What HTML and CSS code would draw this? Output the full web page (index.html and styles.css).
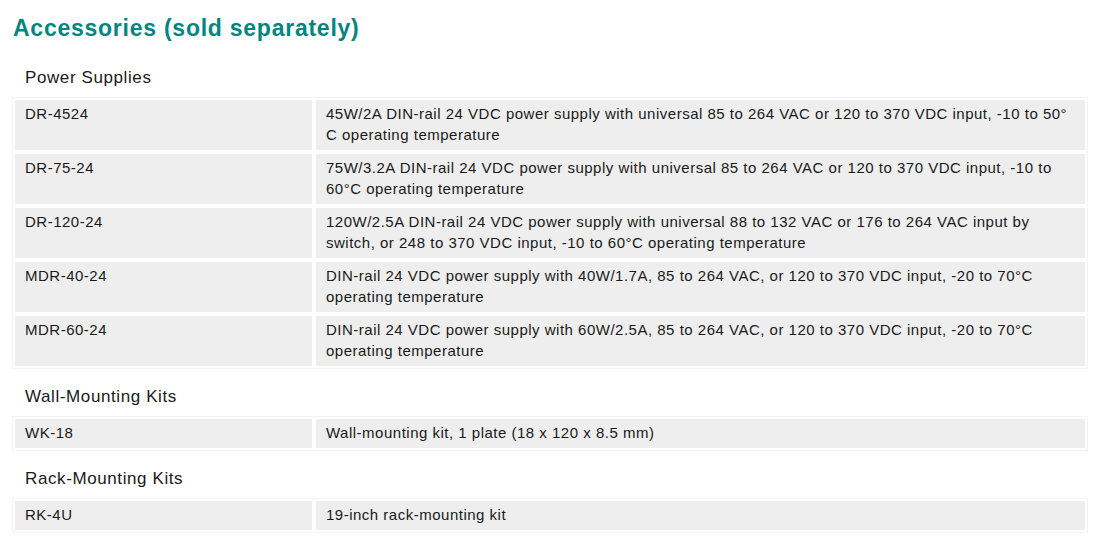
FILE: index.html
```html
<!DOCTYPE html>
<html lang="en">
<head>
<meta charset="utf-8">
<title>Accessories (sold separately)</title>
<link rel="stylesheet" href="styles.css">
</head>
<body>
<main class="page">
  <h2 class="title">Accessories (sold separately)</h2>

  <section class="group">
    <h3 class="group-title">Power Supplies</h3>
    <div class="grid">
      <div class="cell">DR-4524</div>
      <div class="cell">45W/2A DIN-rail 24 VDC power supply with universal 85 to 264 VAC or 120 to 370 VDC input, -10 to 50°<wbr>C operating temperature</div>
      <div class="cell">DR-75-24</div>
      <div class="cell">75W/3.2A DIN-rail 24 VDC power supply with universal 85 to 264 VAC or 120 to 370 VDC input, -10 to 60°C operating temperature</div>
      <div class="cell">DR-120-24</div>
      <div class="cell">120W/2.5A DIN-rail 24 VDC power supply with universal 88 to 132 VAC or 176 to 264 VAC input by switch, or 248 to 370 VDC input, -10 to 60°C operating temperature</div>
      <div class="cell">MDR-40-24</div>
      <div class="cell">DIN-rail 24 VDC power supply with 40W/1.7A, 85 to 264 VAC, or 120 to 370 VDC input, -20 to 70°C operating temperature</div>
      <div class="cell">MDR-60-24</div>
      <div class="cell">DIN-rail 24 VDC power supply with 60W/2.5A, 85 to 264 VAC, or 120 to 370 VDC input, -20 to 70°C operating temperature</div>
    </div>
  </section>

  <section class="group">
    <h3 class="group-title">Wall-Mounting Kits</h3>
    <div class="grid">
      <div class="cell">WK-18</div>
      <div class="cell">Wall-mounting kit, 1 plate (18 x 120 x 8.5 mm)</div>
    </div>
  </section>

  <section class="group">
    <h3 class="group-title">Rack-Mounting Kits</h3>
    <div class="grid">
      <div class="cell">RK-4U</div>
      <div class="cell">19-inch rack-mounting kit</div>
    </div>
  </section>
</main>
</body>
</html>
```

FILE: styles.css
```css
html, body {
  margin: 0;
  padding: 0;
  background: #ffffff;
}

body {
  font-family: "Liberation Sans", Arial, sans-serif;
  color: #1a1a1a;
}

.page {
  display: flex;
  flex-direction: column;
  gap: 17px;
  padding: 15px 12px 0 12px;
  width: 1076px;
}

.title {
  margin: 0 0 9px 1px;
  font-size: 23px;
  line-height: 26px;
  font-weight: 700;
  letter-spacing: 0.75px;
  color: #00857f;
}

.group {
  display: flex;
  flex-direction: column;
  gap: 8px;
}

.group-title {
  margin: 0 0 0 13px;
  font-size: 17px;
  line-height: 22px;
  font-weight: 400;
  letter-spacing: 0.6px;
  color: #1a1a1a;
}

.grid {
  display: grid;
  grid-template-columns: 297px 1fr;
  gap: 4px;
  padding: 2px;
  border: 1px solid #f4f4f4;
}

.cell {
  background: #eeeeee;
  padding: 3px 10px 5px 10px;
  font-size: 15px;
  line-height: 21px;
  letter-spacing: 0.5px;
}
```
